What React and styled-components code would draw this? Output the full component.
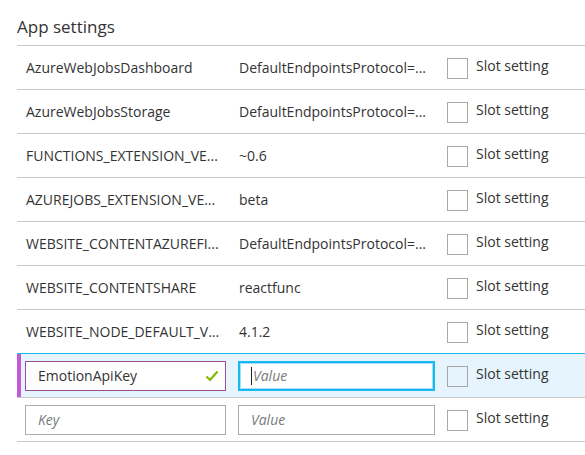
import React from 'react';
import styled, { createGlobalStyle, css } from 'styled-components';

const GlobalStyle = createGlobalStyle`
	body {
		margin: 0;
		background: #ffffff;
		font-family: 'Open Sans', 'Noto Sans', sans-serif;
		color: #333333;
	}
`;

const Panel = styled.div`
	padding: 15px 0 0 17px;
	width: 568px;
	overflow: hidden;
`;

const Title = styled.h2`
	margin: 0;
	padding: 0 0 6px;
	font-size: 17px;
	font-weight: 400;
	line-height: 24px;
	color: #333333;
	border-bottom: 1px solid #c8c8c8;
`;

const Row = styled.div`
	position: relative;
	display: grid;
	grid-template-columns: 201px 197px 1fr;
	column-gap: 12px;
	align-items: center;
	height: 43px;
	padding-left: 8px;
	border-bottom: 1px solid #c8c8c8;
	${(p) =>
		p.$active &&
		css`
			background: #e6f5fd;
			margin-top: -1px;
			border-top: 1px solid #19b9ef;
			&::before {
				content: '';
				position: absolute;
				left: 0;
				top: 0;
				bottom: 0;
				width: 4px;
				background: #c45ad6;
			}
		`}
`;

const CellText = styled.div`
	padding-left: 1px;
	font-size: 14px;
	white-space: nowrap;
	overflow: hidden;
	text-overflow: ellipsis;
	color: #333333;
`;

const InputBox = styled.div`
	position: relative;
	box-sizing: border-box;
	height: 30px;
	display: flex;
	align-items: center;
	padding: 0 12px;
	background: #ffffff;
	border: 1px solid ${(p) => (p.$tone === 'valid' ? '#9a4f98' : '#ababab')};
	font-size: 14px;
	${(p) =>
		p.$focused &&
		css`
			border: 2px solid #18b8f0;
			box-shadow: inset 0 0 0 1px #9fe0f8;
			padding: 0 11px;
		`}
`;

const Placeholder = styled.span`
	font-style: italic;
	color: #7a7a7a;
`;

const Caret = styled.span`
	display: inline-block;
	width: 1px;
	height: 18px;
	margin-right: 1px;
	background: #222222;
`;

const CheckMark = styled.svg`
	position: absolute;
	right: 6px;
	top: 8px;
`;

const SlotCell = styled.label`
	display: flex;
	align-items: flex-start;
	gap: 8px;
	padding-top: 1px;
`;

const CheckBox = styled.span`
	box-sizing: border-box;
	width: 21px;
	height: 21px;
	border: 1px solid #a8a8a8;
	background: transparent;
`;

const SlotLabel = styled.span`
	font-size: 14px;
	line-height: 16px;
	margin-top: 0;
	color: #333333;
`;

const settings = [
	['AzureWebJobsDashboard', 'DefaultEndpointsProtocol=...'],
	['AzureWebJobsStorage', 'DefaultEndpointsProtocol=...'],
	['FUNCTIONS_EXTENSION_VE...', '~0.6'],
	['AZUREJOBS_EXTENSION_VE...', 'beta'],
	['WEBSITE_CONTENTAZUREFI...', 'DefaultEndpointsProtocol=...'],
	['WEBSITE_CONTENTSHARE', 'reactfunc'],
	['WEBSITE_NODE_DEFAULT_V...', '4.1.2'],
];

const Slot = () => (
	<SlotCell>
		<CheckBox />
		<SlotLabel>Slot setting</SlotLabel>
	</SlotCell>
);

const App = () => (
	<>
		<GlobalStyle />
		<Panel>
			<Title>App settings</Title>
			{settings.map(([key, value]) => (
				<Row key={key}>
					<CellText>{key}</CellText>
					<CellText>{value}</CellText>
					<Slot />
				</Row>
			))}
			<Row $active>
				<InputBox $tone="valid">
					EmotionApiKey
					<CheckMark width="14" height="12" viewBox="0 0 14 12">
						<path d="M1.5 6.5 L5 10 L12.5 1.5" fill="none" stroke="#7fba00" strokeWidth="2.2" />
					</CheckMark>
				</InputBox>
				<InputBox $focused>
					<Caret />
					<Placeholder>Value</Placeholder>
				</InputBox>
				<Slot />
			</Row>
			<Row>
				<InputBox>
					<Placeholder>Key</Placeholder>
				</InputBox>
				<InputBox>
					<Placeholder>Value</Placeholder>
				</InputBox>
				<Slot />
			</Row>
		</Panel>
	</>
);

export default App;
